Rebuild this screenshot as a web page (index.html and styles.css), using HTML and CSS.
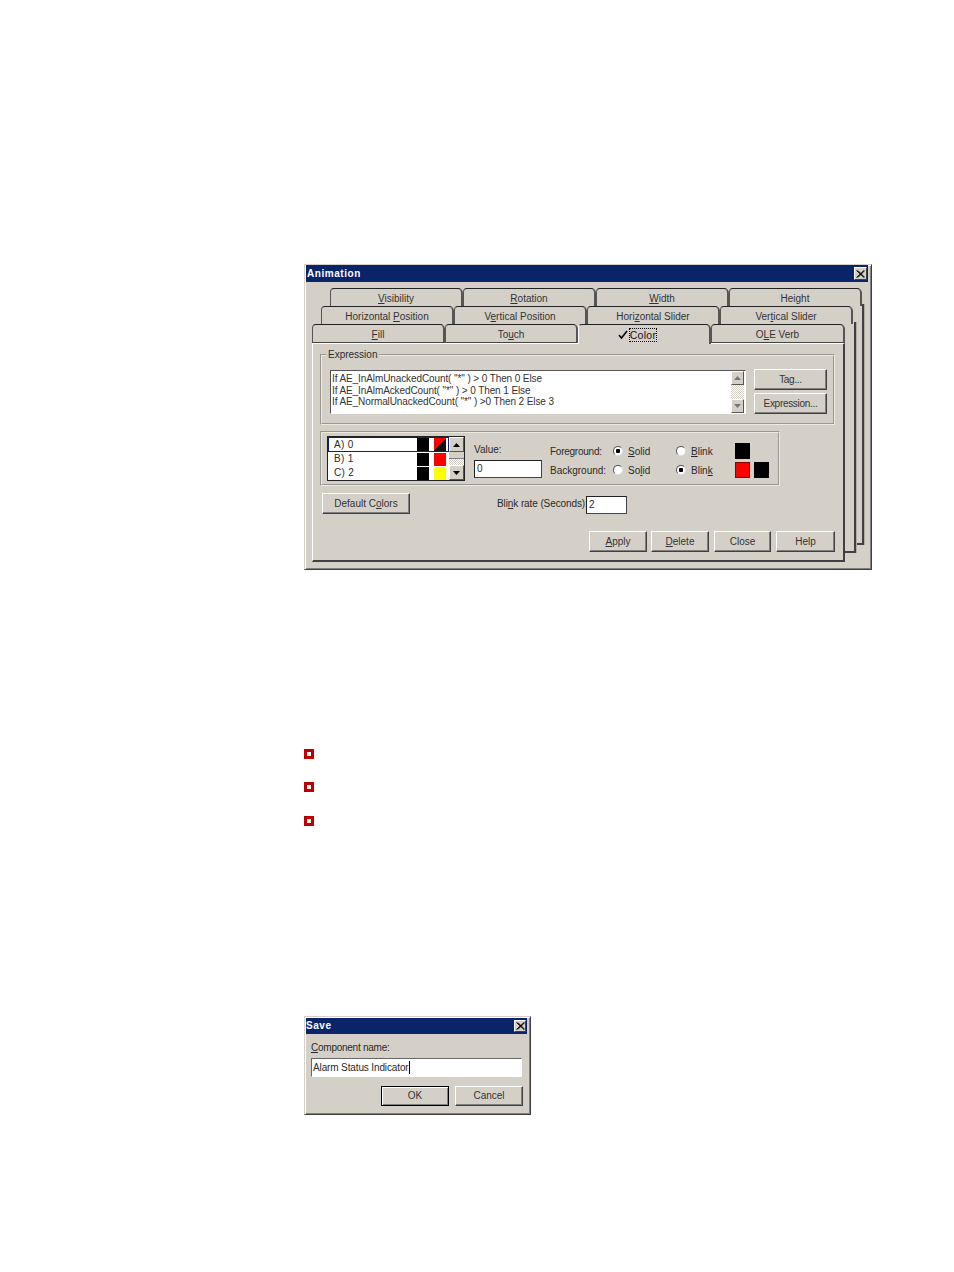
FILE: index.html
```html
<!DOCTYPE html>
<html lang="en">
<head>
<meta charset="utf-8">
<title>Animation</title>
<link rel="stylesheet" href="styles.css">
</head>
<body>
<main class="doc">
  <section class="dialog dialog-animation">
    <header class="titlebar"><span class="title">Animation</span><span class="close"><svg viewBox="0 0 9 8" width="9" height="8"><path d="M0.5 0.5L8 7.5M1.8 0.5L8.8 7.5M8 0.5L0.5 7.5M8.8 0.5L1.8 7.5" stroke="#000" stroke-width="1" fill="none"/></svg></span></header>
    <div class="tabs-area">
      <div class="backpage backpage-far"></div>
      <div class="backpage backpage-near"></div>
      <div class="tabrow row-a">
        <div class="tab"><span><u>V</u>isibility</span></div>
        <div class="tab"><span><u>R</u>otation</span></div>
        <div class="tab"><span><u>W</u>idth</span></div>
        <div class="tab"><span>Height</span></div>
      </div>
      <div class="tabrow row-b">
        <div class="tab"><span>Horizontal <u>P</u>osition</span></div>
        <div class="tab"><span>V<u>e</u>rtical Position</span></div>
        <div class="tab"><span>Hori<u>z</u>ontal Slider</span></div>
        <div class="tab"><span>Ver<u>t</u>ical Slider</span></div>
      </div>
      <div class="tabrow row-c">
        <div class="tab tab-front"><span><u>F</u>ill</span></div>
        <div class="tab tab-front"><span>To<u>u</u>ch</span></div>
        <div class="tab tab-active"><svg class="check" viewBox="0 0 10 9" width="10" height="9"><path d="M1 5L3.5 8L9 1" stroke="#000" stroke-width="1.6" fill="none"/></svg><span class="focus">Color</span></div>
        <div class="tab tab-front tab-last"><span>O<u>L</u>E Verb</span></div>
      </div>
      <div class="page">
        <fieldset class="expr-group">
          <legend>Expression</legend>
          <div class="expr-row">
            <div class="textbox">
              <div class="expr-text">
                <div>If AE_InAlmUnackedCount( "*" ) &gt; 0 Then 0 Else</div>
                <div>If AE_InAlmAckedCount( "*" ) &gt; 0 Then 1 Else</div>
                <div>If AE_NormalUnackedCount( "*" ) &gt;0 Then 2 Else 3</div>
              </div>
              <div class="vscroll vscroll-dim">
                <span class="sbtn"><svg viewBox="0 0 7 4" width="7" height="4"><path d="M3.5 0L7 4H0Z" fill="#777"/></svg></span>
                <span class="strack"></span>
                <span class="sbtn"><svg viewBox="0 0 7 4" width="7" height="4"><path d="M0 0H7L3.5 4Z" fill="#777"/></svg></span>
              </div>
            </div>
            <div class="expr-buttons">
              <button class="btn btn-side">Tag...</button>
              <button class="btn btn-side">Expression...</button>
            </div>
          </div>
        </fieldset>

        <div class="color-group">
          <div class="colorlist">
            <div class="rows">
              <div class="lrow lrow-sel"><span class="lname">A) 0</span><i class="sw sw-black"></i><i class="sw sw-split"></i></div>
              <div class="lrow"><span class="lname">B) 1</span><i class="sw sw-black"></i><i class="sw sw-red"></i></div>
              <div class="lrow"><span class="lname">C) 2</span><i class="sw sw-black"></i><i class="sw sw-yellow"></i></div>
            </div>
            <div class="vscroll vscroll-list">
              <span class="sbtn"><svg viewBox="0 0 7 4" width="7" height="4"><path d="M3.5 0L7 4H0Z" fill="#000"/></svg></span>
              <span class="sthumb"></span>
              <span class="strack"></span>
              <span class="sbtn"><svg viewBox="0 0 7 4" width="7" height="4"><path d="M0 0H7L3.5 4Z" fill="#000"/></svg></span>
            </div>
          </div>
          <div class="value-col">
            <label class="value-label">Value:</label>
            <div class="input input-value">0</div>
          </div>
          <div class="options">
            <span class="opt-label opt-fg">Foreground:</span>
            <span class="radio-item"><i class="radio radio-on"></i><span><u>S</u>olid</span></span>
            <span class="radio-item"><i class="radio"></i><span><u>B</u>link</span></span>
            <i class="big-sw big-black"></i>
            <i class="big-empty"></i>
            <span class="opt-label">Background:</span>
            <span class="radio-item"><i class="radio"></i><span>So<u>l</u>id</span></span>
            <span class="radio-item"><i class="radio radio-on"></i><span>Blin<u>k</u></span></span>
            <i class="big-sw big-red"></i>
            <i class="big-sw big-black"></i>
          </div>
        </div>

        <div class="blink-row">
          <button class="btn btn-default">Default C<u>o</u>lors</button>
          <span class="blink-label">Bli<u>n</u>k rate (Seconds):</span>
          <div class="input input-blink">2</div>
        </div>

        <div class="action-row">
          <button class="btn btn-apply"><u>A</u>pply</button>
          <button class="btn btn-delete"><u>D</u>elete</button>
          <button class="btn btn-close">Close</button>
          <button class="btn btn-help">Help</button>
        </div>
      </div>
    </div>
  </section>

  <ul class="bullets">
    <li></li>
    <li></li>
    <li></li>
  </ul>

  <section class="dialog dialog-save">
    <header class="titlebar titlebar-save"><span class="title">Save</span><span class="close close-save"><svg viewBox="0 0 9 8" width="9" height="8"><path d="M0.5 0.5L8 7.5M1.8 0.5L8.8 7.5M8 0.5L0.5 7.5M8.8 0.5L1.8 7.5" stroke="#000" stroke-width="1" fill="none"/></svg></span></header>
    <div class="save-body">
      <label class="save-label"><u>C</u>omponent name:</label>
      <div class="input input-save"><span class="caret">Alarm Status Indicator</span></div>
      <div class="save-actions">
        <button class="btn btn-ok">OK</button>
        <button class="btn btn-cancel">Cancel</button>
      </div>
    </div>
  </section>
</main>
</body>
</html>
```
FILE: styles.css
```css
* { box-sizing: border-box; }
html, body { margin: 0; background: #fff; }
body {
  font-family: "Liberation Sans", Arial, sans-serif;
  font-size: 10px;
  line-height: 12px;
  color: #2a2a2a;
}
.doc { padding: 264px 0 0 304px; height: 1272px; overflow: hidden; }

/* window chrome */
.dialog {
  background: #d4d0c8;
  border: 1px solid;
  border-color: #d4d0c8 #404040 #404040 #d4d0c8;
  box-shadow: inset 1px 1px 0 #fff, inset -1px -1px 0 #808080;
}
.dialog-animation { width: 568px; height: 306px; }
.dialog-save { width: 227px; height: 99px; margin-top: 190px; }

.titlebar {
  height: 17px;
  margin: 0 3px 0 1px;
  background: #0a246a;
  display: flex;
  align-items: center;
  justify-content: space-between;
  padding: 0 1px 0 1px;
}
.titlebar-save { height: 16px; margin-top: 1px; padding-left: 0; }
.title { color: #fff; font-weight: 700; font-size: 10px; letter-spacing: .55px; }
.close {
  width: 13px;
  height: 13px;
  background: #d4d0c8;
  display: flex;
  align-items: center;
  justify-content: center;
  border: 1px solid;
  border-color: #fff #404040 #404040 #fff;
}
.close-save { width: 12px; height: 12px; }

/* tabs */
.tabs-area { position: relative; margin-top: 6px; }
.backpage {
  position: absolute;
  background: #d4d0c8;
  border-right: 2px solid #404040;
  border-bottom: 2px solid #404040;
  box-shadow: 1px 0 0 #b0aca4;
}
.backpage-far { left: 30px; top: 16px; width: 529px; height: 241px; }
.backpage-near { left: 20px; top: 34px; width: 531px; height: 231px; }
.tabrow { display: flex; position: relative; }
.row-a { margin-left: 25px; height: 18px; }
.row-b { margin-left: 16px; height: 18px; }
.row-c { margin-left: 7px; height: 19px; }
.tab {
  width: 133px;
  flex: none;
  background: #d4d0c8;
  border-top: 1px solid #222;
  border-left: 1px solid #555;
  border-right: 2px solid #555;
  border-radius: 4px 5px 0 0;
  display: flex;
  align-items: center;
  justify-content: center;
  padding-top: 3px;
  color: #333;
}
.tab-front { border-bottom: 1px solid #444; padding-top: 2px; }
.tab-last { width: 134px; }
.tab-active {
  position: relative;
  z-index: 2;
  margin-bottom: -1px;
  border-left: 1px solid #fff;
  padding: 0 14px 0 0;
}
.check { margin-right: 2px; }
.focus { outline: 1px dotted #000; outline-offset: 0; color: #111; letter-spacing: .3px; font-size: 10.5px; }

.page {
  position: relative;
  margin-left: 7px;
  width: 533px;
  height: 219px;
  background: #d4d0c8;
  border-top: 1px solid #fff;
  border-left: 1px solid #fff;
  border-right: 2px solid #404040;
  border-bottom: 2px solid #404040;
}

/* expression group */
.expr-group {
  margin: 5px 0 0 7px;
  width: 515px;
  height: 76px;
  padding: 9px 6px 0 8px;
  border: 2px groove #eeeae2;
  min-width: 0;
}
.expr-group legend { padding: 0 2px; margin-left: -4px; height: 12px; }
.expr-row { display: flex; gap: 8px; }
.textbox {
  width: 416px;
  height: 44px;
  background: #fff;
  display: flex;
  border: 1px solid;
  border-color: #555 #fff #fff #555;
}
.expr-text { flex: 1; padding: 2px 0 0 1px; letter-spacing: -.1px; line-height: 11.5px; color: #333; }
.expr-buttons { display: flex; flex-direction: column; gap: 3px; margin-top: -1px; }

/* scrollbars */
.vscroll { display: flex; flex-direction: column; flex: none; }
.vscroll-dim { width: 13px; margin: 0 1px 0 0; height: 42px; }
.vscroll-list { width: 15px; }
.sbtn {
  height: 14px;
  flex: none;
  background: #d4d0c8;
  border: 1px solid;
  border-color: #fff #555 #555 #fff;
  display: flex;
  align-items: center;
  justify-content: center;
}
.vscroll-list .sbtn { height: 15px; }
.strack {
  flex: 1;
  background: repeating-conic-gradient(#fff 0 25%, #d4d0c8 0 50%) 0 0 / 2px 2px;
}
.sthumb { height: 7px; flex: none; background: #d4d0c8; border-bottom: 1px solid #808080; }

/* colour group */
.color-group {
  margin: 6px 0 0 7px;
  width: 460px;
  height: 55px;
  border: 2px groove #eeeae2;
  padding: 3px 0 0 5px;
  display: flex;
}
.colorlist {
  width: 138px;
  height: 45px;
  background: #fff;
  border: 1px solid #222;
  display: flex;
  flex: none;
}
.rows { width: 121px; flex: none; }
.lrow { height: 14.33px; display: flex; align-items: center; padding-left: 6px; }
.lrow-sel { outline: 1px solid #0a246a; outline-offset: -1px; height: 15px; padding-right: 2px; }
.lname { width: 83px; flex: none; letter-spacing: .3px; }
.sw { width: 12px; height: 13px; display: block; flex: none; }
.sw-black { background: #000; margin-right: 5px; }
.sw-red { background: #f00; }
.sw-yellow { background: #ff0; }
.sw-split { background: linear-gradient(to bottom right, #f00 50%, #111 50%); }

.value-col { margin-left: 9px; width: 68px; flex: none; }
.value-label { display: block; margin-top: 8px; height: 13px; margin-bottom: 3px; }
.input {
  background: #fff;
  border: 1px solid;
  border-color: #222 #444 #444 #222;
  padding-left: 2px;
  display: flex;
  align-items: center;
}
.input-value { height: 18px; }

.options {
  margin: 7px 0 0 8px;
  display: grid;
  grid-template-columns: 63px 63px 59px 19px 15px;
  grid-auto-rows: 16px;
  row-gap: 3px;
  align-items: center;
  white-space: nowrap;
}
.opt-label, .radio-item > span { padding-top: 2px; }
.opt-fg { letter-spacing: -.25px; }
.radio-item { display: flex; align-items: center; gap: 5px; }
.radio {
  width: 10px;
  height: 10px;
  display: block;
  border-radius: 50%;
  background: #fff;
  border: 1px solid;
  border-color: #555 #ddd #ddd #555;
}
.radio-on { background: radial-gradient(circle, #000 0 2px, #fff 2.5px); }
.big-sw { width: 15px; height: 16px; display: block; }
.big-black { background: #000; }
.big-red { background: #f00; border: 1px solid #800; }

/* blink row */
.blink-row { display: flex; align-items: flex-start; margin: 7px 0 0 9px; }
.blink-label { margin: 5px 1px 0 87px; width: 88px; white-space: nowrap; letter-spacing: -.1px; }
.input-blink { width: 41px; height: 18px; margin-top: 3px; }

/* buttons */
.btn {
  font: inherit;
  color: #333;
  background: #d4d0c8;
  padding: 0;
  margin: 0;
  height: 21px;
  border: 1px solid;
  border-color: #fff #404040 #404040 #fff;
  box-shadow: inset -1px -1px 0 #808080;
}
.btn-side { width: 73px; letter-spacing: -.3px; }
.btn-default { width: 88px; flex: none; }
.action-row { display: flex; margin: 17px 0 0 276px; }
.btn-apply { width: 58px; }
.btn-delete { width: 58px; margin-left: 4px; }
.btn-close { width: 57px; margin-left: 5px; }
.btn-help { width: 59px; margin-left: 5px; }

/* bullets */
.bullets {
  list-style: none;
  margin: 179px 0 0;
  padding: 0;
  display: flex;
  flex-direction: column;
  gap: 23.4px;
}
.bullets li {
  width: 10px;
  height: 10px;
  border: 3px solid #c00000;
  background: #fff;
}

/* save dialog */
.save-body { padding: 8px 0 0 6px; }
.save-label { display: block; height: 12px; letter-spacing: -.25px; }
.input-save {
  width: 211px;
  height: 19px;
  margin-top: 4px;
  border-color: #666 #fff #fff #666;
  padding-left: 1px;
  letter-spacing: -.13px;
}
.caret { border-right: 1px solid #000; line-height: 13px; }
.save-actions { display: flex; margin: 9px 0 0 70px; height: 20px; }
.btn-ok {
  width: 68px;
  height: 20px;
  border: 1px solid #000;
  box-shadow: inset 1px 1px 0 #fff, inset -1px -1px 0 #808080;
}
.btn-cancel { width: 68px; height: 20px; margin-left: 6px; }
```
